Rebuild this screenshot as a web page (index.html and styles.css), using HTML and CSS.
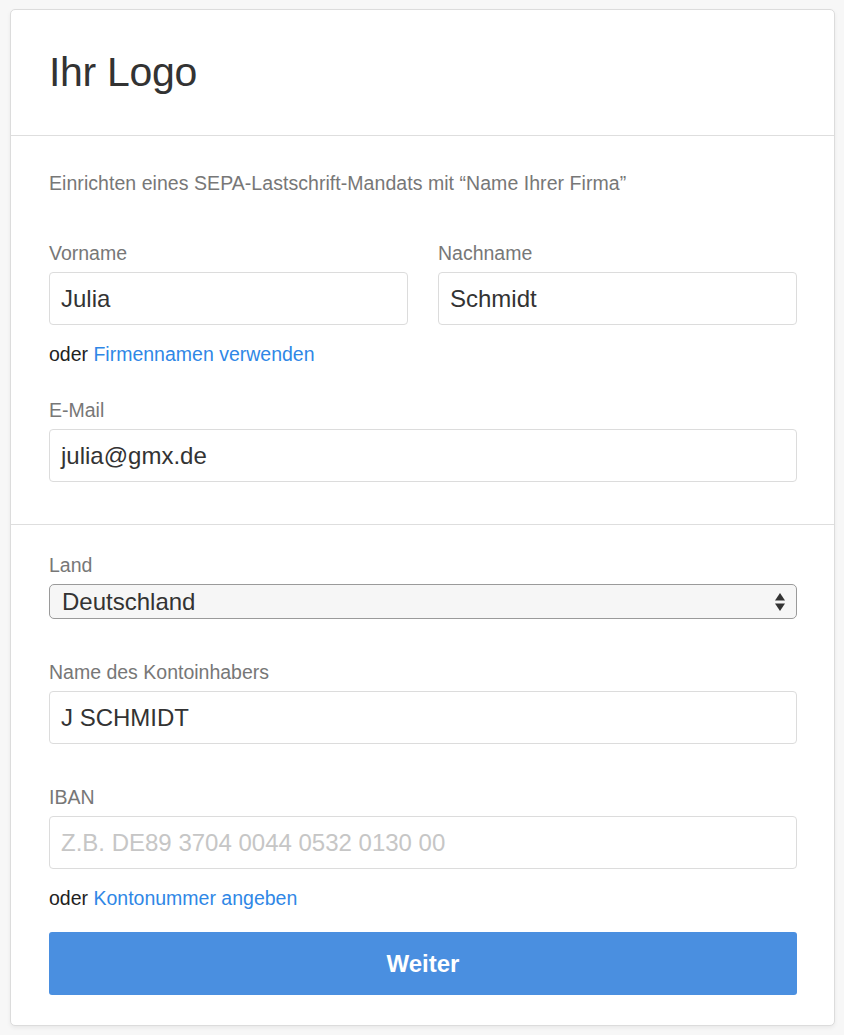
FILE: index.html
```html
<!DOCTYPE html>
<html lang="de">
<head>
<meta charset="utf-8">
<title>SEPA-Lastschrift-Mandat</title>
<link rel="stylesheet" href="styles.css">
</head>
<body>
<div class="card">
  <div class="header"><h1 class="logo">Ihr Logo</h1></div>
  <div class="section first">
    <p class="intro">Einrichten eines SEPA-Lastschrift-Mandats mit “Name Ihrer Firma”</p>
    <div class="row">
      <div class="field">
        <div class="label">Vorname</div>
        <div class="input">Julia</div>
      </div>
      <div class="field">
        <div class="label">Nachname</div>
        <div class="input">Schmidt</div>
      </div>
    </div>
    <div class="alt">oder <a class="link">Firmennamen verwenden</a></div>
    <div class="field gap-sm">
      <div class="label">E-Mail</div>
      <div class="input">julia@gmx.de</div>
    </div>
  </div>
  <div class="section second">
    <div class="field">
      <div class="label">Land</div>
      <div class="select">
        <span>Deutschland</span>
        <svg class="arrows" width="12" height="20" viewBox="0 0 12 20"><path d="M6 1 L11 8.5 H1 Z" fill="#333"/><path d="M6 19 L11 11.5 H1 Z" fill="#333"/></svg>
      </div>
    </div>
    <div class="field gap-lg">
      <div class="label">Name des Kontoinhabers</div>
      <div class="input">J SCHMIDT</div>
    </div>
    <div class="field gap-lg">
      <div class="label">IBAN</div>
      <div class="input placeholder">Z.B. DE89 3704 0044 0532 0130 00</div>
    </div>
    <div class="alt">oder <a class="link">Kontonummer angeben</a></div>
    <div class="button">Weiter</div>
  </div>
</div>
</body>
</html>
```
FILE: styles.css
```css
html, body {
  margin: 0;
  padding: 0;
  background: #f7f7f7;
  font-family: "Liberation Sans", Arial, sans-serif;
  color: #333;
}
body {
  padding: 9px 9px 10px 10px;
}
.card {
  background: #fff;
  border: 1px solid #dcdcdc;
  border-radius: 5px;
  box-shadow: 0 2px 4px rgba(0,0,0,0.06);
}
.header {
  height: 125px;
  display: flex;
  align-items: center;
  padding: 0 37px 0 38px;
  border-bottom: 1px solid #dedede;
}
.logo {
  margin: 0;
  font-size: 41px;
  font-weight: normal;
  color: #333;
  letter-spacing: -0.3px;
}
.section {
  padding: 0 37px 0 38px;
}
.section.first {
  padding-top: 37px;
  padding-bottom: 42px;
  border-bottom: 1px solid #dedede;
}
.section.second {
  padding-top: 30px;
  padding-bottom: 30px;
}
.intro {
  margin: 0 0 50px;
  font-size: 19.5px;
  line-height: 20px;
  color: #777;
  letter-spacing: 0.05px;
}
.row {
  display: grid;
  grid-template-columns: 1fr 1fr;
  gap: 30px;
}
.label {
  font-size: 19.5px;
  line-height: 20px;
  color: #777;
  margin-bottom: 9px;
}
.input {
  box-sizing: border-box;
  height: 53px;
  border: 1px solid #dcdcdc;
  border-radius: 4px;
  padding: 0 11px;
  display: flex;
  align-items: center;
  font-size: 24px;
  color: #333;
}
.input.placeholder {
  color: #c6c6c6;
}
.alt {
  margin-top: 19px;
  font-size: 19.5px;
  line-height: 20px;
  color: #222;
}
.link {
  color: #2f87e6;
  text-decoration: none;
}
.gap-sm {
  margin-top: 36px;
}
.gap-lg {
  margin-top: 43px;
}
.select {
  box-sizing: border-box;
  height: 35px;
  border: 1px solid #9a9a9a;
  border-radius: 5px;
  background: #f6f6f6;
  display: flex;
  align-items: center;
  justify-content: space-between;
  padding: 0 10px 0 12px;
  font-size: 24px;
  color: #333;
}
.arrows {
  display: block;
}
.button {
  margin-top: 24px;
  height: 63px;
  background: #4a8fe0;
  border-radius: 3px;
  display: flex;
  align-items: center;
  justify-content: center;
  color: #fff;
  font-weight: bold;
  font-size: 24px;
}
```
